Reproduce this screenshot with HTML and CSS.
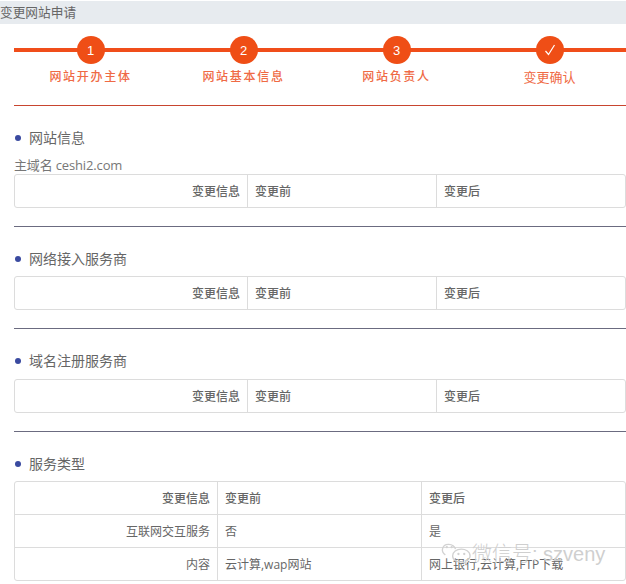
FILE: index.html
```html
<!DOCTYPE html>
<html lang="zh">
<head>
<meta charset="utf-8">
<title>变更网站申请</title>
<link rel="stylesheet" href="styles.css">
</head>
<body>
<div class="page">
  <div class="title">变更网站申请</div>
  <div class="main">
    <div class="steps">
      <div class="step"><span class="dot">1</span><span class="label">网站开办主体</span></div>
      <div class="step"><span class="dot">2</span><span class="label">网站基本信息</span></div>
      <div class="step"><span class="dot">3</span><span class="label">网站负责人</span></div>
      <div class="step"><span class="dot"><svg width="16" height="16" viewBox="0 0 16 16"><path d="M3.5 9 L6.5 12.5 L12.5 3" fill="none" stroke="#fff" stroke-width="1.2"/></svg></span><span class="label last">变更确认</span></div>
    </div>
    <hr class="rule red">

    <section class="sec">
      <h3 class="head">网站信息</h3>
      <p class="domain">主域名 ceshi2.com</p>
      <table class="tbl">
        <colgroup><col class="c1"><col class="c2"><col class="c3"></colgroup>
        <tr><th class="r">变更信息</th><th>变更前</th><th>变更后</th></tr>
      </table>
    </section>
    <hr class="rule">

    <section class="sec">
      <h3 class="head">网络接入服务商</h3>
      <table class="tbl">
        <colgroup><col class="c1"><col class="c2"><col class="c3"></colgroup>
        <tr><th class="r">变更信息</th><th>变更前</th><th>变更后</th></tr>
      </table>
    </section>
    <hr class="rule">

    <section class="sec">
      <h3 class="head loose">域名注册服务商</h3>
      <table class="tbl">
        <colgroup><col class="c1"><col class="c2"><col class="c3"></colgroup>
        <tr><th class="r">变更信息</th><th>变更前</th><th>变更后</th></tr>
      </table>
    </section>
    <hr class="rule">

    <section class="sec">
      <h3 class="head">服务类型</h3>
      <table class="tbl">
        <colgroup><col class="n1"><col class="n2"><col class="n3"></colgroup>
        <tr><th class="r">变更信息</th><th>变更前</th><th>变更后</th></tr>
        <tr><td class="r">互联网交互服务</td><td>否</td><td>是</td></tr>
        <tr><td class="r">内容</td><td>云计算,wap网站</td><td>网上银行,云计算,FTP下载</td></tr>
      </table>
    </section>
  </div>
  <div class="mark">
    <svg width="31" height="24" viewBox="0 0 32 24"><g fill="none" stroke="#d2d2d2" stroke-width="1.4"><path d="M15 8 C13 2 3 1 1.5 8 C1 11 3 13 4.5 14"/><path d="M30 15 C30 10 25 8 21 8 C16 8 12 11 12 15 C12 19 17 22 22 21 L26 23 L25 20 C28 19 30 17 30 15Z"/></g><circle cx="6" cy="6" r="1.2" fill="#d2d2d2"/><circle cx="11" cy="6" r="1.2" fill="#d2d2d2"/><circle cx="18" cy="13" r="1.2" fill="#d2d2d2"/><circle cx="24" cy="13" r="1.2" fill="#d2d2d2"/></svg>
    <span>微信号: szveny</span>
  </div>
</div>
</body>
</html>
```

FILE: styles.css
```css
html, body { margin: 0; padding: 0; background: #fff; }
body { font-family: "Liberation Sans", "Noto Sans CJK SC", sans-serif; color: #666; }
.page { position: relative; width: 626px; height: 584px; overflow: hidden; padding-top: 1px; box-sizing: border-box; }
.title { height: 23px; padding-top: 1px; box-sizing: border-box; line-height: 23px; background: #e7ebef; font-size: 12.7px; color: #666; }
.main { padding-left: 14px; }

.steps { display: flex; height: 81px; background: linear-gradient(#f04e1a, #f04e1a) no-repeat 0 24px / 100% 4px; }
.step { width: 153px; display: flex; flex-direction: column; align-items: center; padding-top: 12px; box-sizing: border-box; }
.dot { width: 28px; height: 28px; border-radius: 50%; background: #ef4e16; color: #fff; font-size: 13px; font-weight: 500; display: flex; align-items: center; justify-content: center; }
.label { margin-top: 5px; font-size: 12px; line-height: 16px; letter-spacing: 1.7px; color: #ef6a45; font-weight: 500; }
.label.last { margin-top: 6px; font-size: 13px; letter-spacing: 0; font-weight: normal; }

.rule { margin: 0; border: 0; height: 1px; background: #6b6b80; }
.rule.red { background: #c8452f; }

.sec { padding-top: 22px; padding-bottom: 18px; }
.head { position: relative; margin: 0; padding-left: 15px; font-size: 14px; line-height: 20px; font-weight: normal; color: #666; }
.head.loose { margin-bottom: 8px; }
.head::before { content: ""; position: absolute; left: 1px; top: 7px; width: 6px; height: 6px; border-radius: 50%; background: #3a4aa0; }
.domain { margin: 9px 0 0; font-family: "Open Sans", "Noto Sans CJK SC", sans-serif; font-size: 13px; line-height: 16px; letter-spacing: -0.15px; color: #777; height: 10px; }
.tbl { width: 612px; margin-top: 7px; border-collapse: separate; border-spacing: 0; table-layout: fixed; border: 1px solid #dcdcdc; border-radius: 3px; font-family: "Open Sans", "Noto Sans CJK SC", sans-serif; font-size: 12px; color: #666; }
.head.loose + .tbl { margin-top: 0; }
.c1 { width: 232px; }
.c2 { width: 189px; }
.n1 { width: 202px; }
.n2 { width: 204px; }
.tbl th, .tbl td { height: 33px; padding: 0 7px; box-sizing: border-box; text-align: left; border-left: 1px solid #dcdcdc; border-top: 1px solid #dcdcdc; }
.tbl th { height: 32px; font-weight: 500; color: #666; }
.tbl td { font-weight: normal; }
.tbl tr:first-child th { border-top: 0; }
.tbl tr > :first-child { border-left: 0; }
.tbl .r { text-align: right; }

.mark { position: absolute; left: 441px; top: 538px; display: flex; align-items: center; font-size: 20px; font-weight: 300; color: #cfcfcf; }
```
